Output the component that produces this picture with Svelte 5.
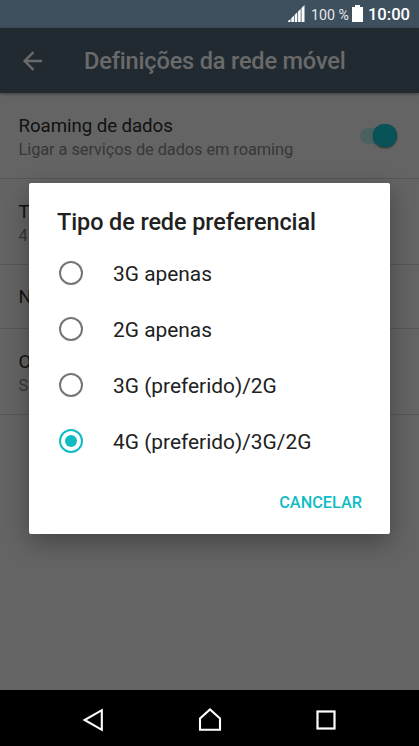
<script lang="ts">
	type Setting = { title: string; summary?: string; toggle?: boolean };

	const settings: Setting[] = [
		{ title: 'Roaming de dados', summary: 'Ligar a serviços de dados em roaming', toggle: true },
		{ title: 'T', summary: '4' },
		{ title: 'N' },
		{ title: 'O', summary: 'S' }
	];

	const networkTypes = ['3G apenas', '2G apenas', '3G (preferido)/2G', '4G (preferido)/3G/2G'];

	let selected = $state(3);
	let open = $state(true);
</script>

<div class="phone">
	<div class="status-bar">
		<svg class="signal" width="17" height="17" viewBox="0 0 17 17">
			<path d="M0 17v-1l2.5-2V17zM3.3 17v-3.8l2.6-2.6V17zM6.7 17v-7.2l2.6-2.6V17zM10.1 17V6.4l2.6-2.6V17zM13.5 17V3L16.5 0v17z" fill="#fff" />
		</svg>
		<span class="percent">100 %</span>
		<svg class="battery" width="11" height="17" viewBox="0 0 11 17">
			<path d="M3 0h5v2h3v15H0V2h3z" fill="#fff" />
		</svg>
		<span class="clock">10:00</span>
	</div>

	<header>
		<svg width="20" height="20" viewBox="0 0 20 20">
			<path d="M19 10H2M10.5 1.2L1.7 10l8.8 8.8" fill="none" stroke="#6a6a6a" stroke-width="2.4" />
		</svg>
		<h1>Definições da rede móvel</h1>
	</header>

	<main>
		{#each settings as setting}
			<div class="setting" class:single={!setting.summary}>
				<div class="text">
					<div class="title">{setting.title}</div>
					{#if setting.summary}
						<div class="summary">{setting.summary}</div>
					{/if}
				</div>
				{#if setting.toggle}
					<div class="switch"><div class="thumb"></div></div>
				{/if}
			</div>
		{/each}
	</main>

	<nav>
		<svg width="22" height="24" viewBox="0 0 22 24">
			<path d="M19.8 2.2v19.6L2.6 12z" fill="none" stroke="#fff" stroke-width="2.1" />
		</svg>
		<svg width="24" height="24" viewBox="0 0 24 24">
			<path d="M2 21.8V10.4L12 1.4l10 9v11.4z" fill="none" stroke="#fff" stroke-width="2.1" />
		</svg>
		<svg width="20" height="20" viewBox="0 0 20 20">
			<rect x="1.5" y="1.5" width="17" height="17" fill="none" stroke="#fff" stroke-width="2.2" />
		</svg>
	</nav>

	{#if open}
		<div class="dialog" role="dialog">
			<h2>Tipo de rede preferencial</h2>
			<div class="options">
				{#each networkTypes as type, i}
					<button class="option" onclick={() => (selected = i)}>
						<span class="radio" class:checked={selected === i}></span>
						<span class="label">{type}</span>
					</button>
				{/each}
			</div>
			<button class="cancel" onclick={() => (open = false)}>CANCELAR</button>
		</div>
	{/if}
</div>

<style>
	:global(body) {
		background: #646464;
	}

	.phone {
		position: relative;
		display: flex;
		flex-direction: column;
		width: 419px;
		height: 746px;
		overflow: hidden;
		background: #646464;
		font-family: Roboto, sans-serif;
		color: #212121;
	}

	.status-bar {
		display: flex;
		align-items: center;
		justify-content: flex-end;
		flex-shrink: 0;
		height: 28px;
		padding-right: 9px;
		box-sizing: border-box;
		background: #3e4f5e;
		color: #fff;
	}

	.signal {
		margin-bottom: 1px;
	}

	.percent {
		margin: 1px 3px 0 6px;
		font-size: 14.2px;
		color: #e4e8eb;
	}

	.battery {
		margin-bottom: 1px;
	}

	.clock {
		margin: 1px 0 0 5px;
		font-size: 16.6px;
		font-weight: 500;
	}

	header {
		position: relative;
		display: flex;
		align-items: center;
		flex-shrink: 0;
		height: 65px;
		padding-left: 23px;
		background: #222a31;
		box-shadow: 0 1px 3px rgba(0, 0, 0, 0.4);
	}

	h1 {
		margin: 1px 0 0 41px;
		font-size: 23.6px;
		line-height: 28px;
		font-weight: 500;
		letter-spacing: -0.2px;
		color: #6a6a6a;
		white-space: nowrap;
	}

	main {
		flex: 1;
	}

	.setting {
		display: flex;
		align-items: center;
		justify-content: space-between;
		height: 86px;
		padding: 0 22.5px 0 18.5px;
		box-sizing: border-box;
		border-bottom: 1px solid #575757;
	}

	.setting.single {
		height: 64px;
	}

	.text {
		padding-top: 3px;
	}

	.single .text {
		padding-top: 1px;
	}

	.title {
		font-size: 18.7px;
		line-height: 24px;
		letter-spacing: -0.07px;
		color: #111;
	}

	.summary {
		font-size: 16.4px;
		line-height: 23px;
		letter-spacing: -0.08px;
		color: #373737;
	}

	.switch {
		display: flex;
		align-items: center;
		justify-content: flex-end;
		width: 37px;
		height: 16px;
		border-radius: 8px;
		background: #496261;
	}

	.thumb {
		flex-shrink: 0;
		width: 23.5px;
		height: 23.5px;
		border-radius: 50%;
		background: #065257;
		box-shadow: 0 1px 2px rgba(0, 0, 0, 0.5);
	}

	nav {
		display: flex;
		align-items: center;
		flex-shrink: 0;
		gap: 94px;
		height: 56px;
		padding: 3px 0 0 82px;
		box-sizing: border-box;
		background: #000;
	}

	.dialog {
		position: absolute;
		left: 29px;
		top: 183px;
		display: flex;
		flex-direction: column;
		width: 361px;
		height: 351px;
		border-radius: 2px;
		background: #fff;
		box-shadow: 0 8px 26px rgba(0, 0, 0, 0.32);
	}

	h2 {
		margin: 25px 0 9px 28px;
		font-size: 23.4px;
		line-height: 28px;
		font-weight: 500;
		letter-spacing: -0.07px;
	}

	button {
		padding: 0;
		border: 0;
		background: none;
		font-family: inherit;
		color: inherit;
	}

	.option {
		display: flex;
		align-items: center;
		gap: 30px;
		width: 100%;
		height: 56px;
		padding-left: 30px;
		font-size: 20.9px;
	}

	.label {
		padding-top: 2px;
	}

	.radio {
		display: flex;
		align-items: center;
		justify-content: center;
		width: 24px;
		height: 24px;
		box-sizing: border-box;
		border: 2.4px solid #757575;
		border-radius: 50%;
	}

	.radio.checked {
		border-color: #10bcc4;
	}

	.radio.checked::after {
		content: '';
		width: 12px;
		height: 12px;
		border-radius: 50%;
		background: #10bcc4;
	}

	.cancel {
		align-self: flex-end;
		margin: 22px 28px 0 0;
		font-size: 16.3px;
		line-height: 24px;
		font-weight: 500;
		color: #10bcc4;
	}
</style>
